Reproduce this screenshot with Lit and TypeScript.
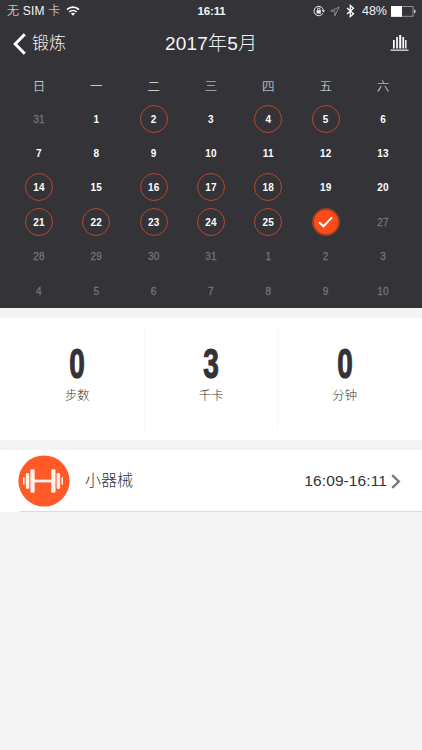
import { LitElement, html, css, svg } from "lit";
import { customElement } from "lit/decorators.js";
import { classMap } from "lit/directives/class-map.js";

const WEEKDAYS = ["日", "一", "二", "三", "四", "五", "六"];
const WORKOUT_DAYS = [2, 4, 5, 14, 16, 17, 18, 21, 22, 23, 24, 25];
const SELECTED = 26;

interface Day {
  label: number;
  outside: boolean;
  ring: boolean;
  selected: boolean;
}

function buildDays(): Day[] {
  const days: Day[] = [{ label: 31, outside: true, ring: false, selected: false }];
  for (let d = 1; d <= 31; d++) {
    days.push({ label: d, outside: d > SELECTED, ring: WORKOUT_DAYS.includes(d), selected: d === SELECTED });
  }
  for (let d = 1; d <= 10; d++) {
    days.push({ label: d, outside: true, ring: false, selected: false });
  }
  return days;
}

@customElement("status-bar")
class StatusBar extends LitElement {
  static styles = css`
    :host { display: grid; grid-template-columns: 1fr auto 1fr; height: 22px; line-height: 22px; color: #f4f4f5; font-size: 12px; }
    .left { display: flex; align-items: center; padding-left: 7px; }
    .carrier { width: 54px; white-space: nowrap; font-weight: 300; letter-spacing: 0.2px; }
    .clock { position: relative; left: 0.5px; font-weight: 700; font-size: 11.5px; letter-spacing: -0.2px; }
    .right { display: flex; align-items: center; justify-content: flex-end; padding-right: 6px; }
    .wifi { margin-left: 5px; }
    .lock { margin-right: 5px; }
    .arrow { margin-right: 6px; }
    .bt { margin-right: 7px; }
    .pct { margin-right: 4px; font-size: 12.5px; }
    svg { display: block; }
  `;
  render() {
    return html`
      <div class="left">
        <span class="carrier">无 SIM 卡</span>
        <svg class="wifi" width="14" height="10" viewBox="0 0 14 10" fill="none" stroke="#fff" stroke-width="1.7">
          <path d="M1 3.6C4.4.3 9.6.3 13 3.6M3.3 6C5.3 4 8.7 4 10.7 6" />
          <path d="M7 9.8L4.9 7.6Q7 6 9.1 7.6Z" fill="#fff" stroke="none" />
        </svg>
      </div>
      <span class="clock">16:11</span>
      <div class="right">
        <svg class="lock" width="12" height="12" viewBox="0 0 12 12" fill="none" stroke="#eee">
          <path d="M9.9 8.2A4.7 4.7 0 1 1 10.4 5.5" />
          <path d="M8.6 5.3h3.4L10.4 7.5z" fill="#eee" stroke="none" />
          <path d="M3.6 5.2h4.2v3.4H3.6z" fill="#eee" stroke="none" />
          <path d="M4.5 5.5V4.2a1.2 1.2 0 0 1 2.4 0v1.3" />
        </svg>
        <svg class="arrow" width="10" height="11" viewBox="0 0 10 11" fill="none" stroke="#96969a" stroke-width=".9">
          <path d="M9.2 1L.8 5.1H4.8V9.8Z" />
        </svg>
        <svg class="bt" width="9" height="14" viewBox="0 0 9 14" fill="none" stroke="#fff" stroke-width="1.3">
          <path d="M1 4L7.5 9.7 4.3 12.6V1.4L7.5 4.3 1 10" />
        </svg>
        <span class="pct">48%</span>
        <svg width="25" height="11" viewBox="0 0 25 11">
          <rect x=".5" y=".5" width="21.5" height="9.8" fill="none" stroke="#929296" />
          <rect x="0" y="0" width="11" height="10.8" fill="#fff" />
          <path d="M23 3.6h.6q1 0 1 1.8t-1 1.8H23z" fill="#c8c8ca" />
        </svg>
      </div>
    `;
  }
}

@customElement("nav-bar")
class NavBar extends LitElement {
  static styles = css`
    :host { display: grid; grid-template-columns: 1fr auto 1fr; align-items: center; height: 42px; color: #f6f6f7; }
    .back { display: flex; align-items: center; gap: 6px; padding-left: 13px; font-size: 17px; font-weight: 300; line-height: 42px; }
    .back span { padding-top: 1px; }
    .title { font-size: 19px; line-height: 42px; font-weight: 300; letter-spacing: 0.2px; }
    .chart { justify-self: end; margin: 0 13px 2px 0; }
    svg { display: block; }
  `;
  render() {
    return html`
      <div class="back">
        <svg width="13" height="22" viewBox="0 0 13 22" fill="none" stroke="#fff" stroke-width="3">
          <path d="M11.8 1.2L2.2 11l9.6 9.8" />
        </svg>
        <span>锻炼</span>
      </div>
      <span class="title">2017年5月</span>
      <svg class="chart" width="19" height="17" viewBox="0 0 19 17" fill="#fff">
        <rect x="3" y="6" width="1.7" height="8.5" />
        <rect x="6.2" y="3" width="1.7" height="11.5" />
        <rect x="9.2" y="1" width="2" height="13.5" />
        <rect x="12.4" y="3" width="1.7" height="11.5" />
        <rect x="15.1" y="6" width="1.4" height="8.5" />
        <rect x=".5" y="15.6" width="18" height="1.1" />
      </svg>
    `;
  }
}

@customElement("month-grid")
class MonthGrid extends LitElement {
  static styles = css`
    :host { display: block; padding: 5px 10.3px 0; height: 238.7px; }
    .grid { display: grid; grid-template-columns: repeat(7, 1fr); grid-template-rows: 32.5px repeat(6, 34.4px); justify-items: center; align-items: center; }
    .name { padding-top: 4px; color: #e8e8ea; font-size: 12.5px; font-weight: 300; line-height: 20px; }
    .day { box-sizing: border-box; width: 28px; height: 28px; line-height: 29px; text-align: center; font-size: 10px; letter-spacing: 0.2px; font-weight: 700; color: #fff; border-radius: 50%; }
    .outside { color: #74747a; font-weight: 400; -webkit-text-stroke: 0.3px #74747a; }
    .ring { border: 1px solid #b8462d; line-height: 27px; }
    .selected { border: 1px solid #9c3c24; background: #ff4b18; box-shadow: inset 0 0 0 1px #a03f27; display: grid; place-items: center; }
    svg { display: block; }
  `;
  render() {
    return html`
      <div class="grid">
        ${WEEKDAYS.map((n) => html`<span class="name">${n}</span>`)}
        ${buildDays().map(
          (d) => html`<div class=${classMap({ day: true, outside: d.outside, ring: d.ring, selected: d.selected })}>
            ${d.selected
              ? html`<svg width="15" height="12" viewBox="0 0 15 12" fill="none" stroke="#fff" stroke-width="2">
                  <path d="M1 6.2L5.5 10.3 14 1.4" />
                </svg>`
              : d.label}
          </div>`
        )}
      </div>
    `;
  }
}

@customElement("day-stats")
class DayStats extends LitElement {
  static styles = css`
    :host { display: grid; grid-template-columns: 11px 1fr 1fr 1fr 10px; height: 122px; box-sizing: border-box; padding: 10px 0; background: #fff; }
    .cell { display: flex; flex-direction: column; align-items: center; padding-top: 13px; border-right: 1px solid #f7f7f7; }
    .first { grid-column: 2; }
    .last { border-right-color: transparent; }
    .value { height: 42px; line-height: 44px; font-size: 43px; font-weight: 700; color: #333238; transform: scaleX(0.65); -webkit-text-stroke: 1.2px #333238; }
    .label { margin-top: 3px; font-size: 12.3px; line-height: 20px; font-weight: 300; color: #333; }
  `;
  render() {
    const stats = [["0", "步数"], ["3", "千卡"], ["0", "分钟"]];
    return stats.map(
      ([value, label], i) => html`<div class=${classMap({ cell: true, first: i === 0, last: i === 2 })}>
        <span class="value">${value}</span>
        <span class="label">${label}</span>
      </div>`
    );
  }
}

@customElement("workout-row")
class WorkoutRow extends LitElement {
  static styles = css`
    :host { display: flex; align-items: center; height: 62px; box-sizing: border-box; padding: 0 21px 0 18px; background: linear-gradient(#dcdcdc, #dcdcdc) 20px 100% / 100% 1px no-repeat #fff; color: #333238; }
    .name { flex: 1; margin-left: 15px; font-size: 16px; font-weight: 300; line-height: 60px; }
    .time { font-size: 15.5px; letter-spacing: 0.1px; margin-right: 4px; line-height: 60px; }
    svg { display: block; }
  `;
  render() {
    const plates = [
      [5, 22.2, 1.6, 7.6], [7.8, 18, 3.5, 16], [12.4, 14.2, 4.3, 23.6],
      [33.2, 14.2, 4.3, 23.6], [38.6, 18, 3.5, 16], [43.4, 22.2, 1.6, 7.6],
    ];
    return html`
      <svg width="52" height="52" viewBox="0 0 52 52">
        <circle cx="26" cy="26" r="25.6" fill="#ff5a28" />
        <rect x="15" y="24.6" width="20" height="2.8" fill="#fff2ed" />
        ${plates.map(([x, y, w, h]) => svg`<rect x=${x} y=${y} width=${w} height=${h} rx=${w > 2 ? 1.4 : 0.7} fill="#fff2ed" />`)}
      </svg>
      <span class="name">小器械</span>
      <span class="time">16:09-16:11</span>
      <svg width="10" height="15" viewBox="0 0 10 15" fill="none" stroke="#77777a" stroke-width="2.4">
        <path d="M1.2 1.2L7.8 7.5 1.2 13.8" />
      </svg>
    `;
  }
}

@customElement("app-root")
class AppRoot extends LitElement {
  static styles = css`
    :host { display: flex; flex-direction: column; gap: 10px; height: 750px; overflow: hidden; background: #f4f4f4; font-family: "Liberation Sans", "Noto Sans CJK SC", sans-serif; }
    .top { background: #343338; height: 308px; box-sizing: border-box; }
  `;
  render() {
    return html`
      <div class="top">
        <status-bar></status-bar>
        <nav-bar></nav-bar>
        <month-grid></month-grid>
      </div>
      <day-stats></day-stats>
      <workout-row></workout-row>
    `;
  }
}
